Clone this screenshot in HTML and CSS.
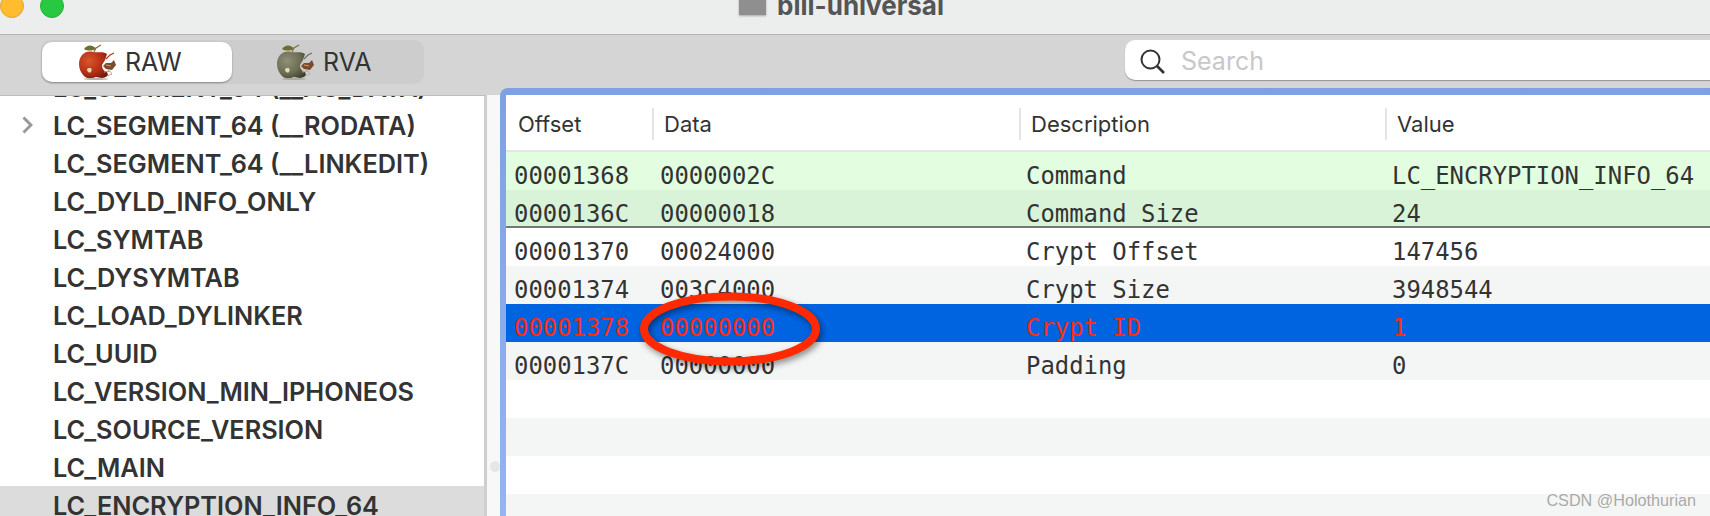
FILE: index.html
```html
<!DOCTYPE html>
<html lang="en">
<head>
  <meta charset="UTF-8" />
  <title>bili-universal</title>
  <link rel="stylesheet" href="styles.css">
</head>
<body>
  <div class="window">
    <header class="titlebar">
      <span class="light light-yellow"></span>
      <span class="light light-green"></span>
      <div class="title">
        <span class="folder"></span>
        <strong>bili-universal</strong>
      </div>
    </header>

    <div class="toolbar">
      <div class="segmented">
        <div class="seg active">
          <svg class="apple" viewBox="0 0 38 36">
            <defs>
              <radialGradient id="redBody" cx="0.35" cy="0.35" r="0.8">
                <stop offset="0" stop-color="#d9562a"/>
                <stop offset="0.6" stop-color="#b32c16"/>
                <stop offset="1" stop-color="#6e180b"/>
              </radialGradient>
            </defs>
            <path d="M5 5C8 1 13 0 17 5C13 7 8 7 5 5Z" fill="#6d6f32"/>
            <path d="M15 8L17 4L22 1" fill="none" stroke="#8a6a3a" stroke-width="1.2"/>
            <path d="M0 20C0 11 7 6 14 8C19 9 23 7 28 10L26 16L23 21C23 25 25 27 28 28L29 31C26 35 21 34 17 33C12 35 8 35 5 32C2 29 0 25 0 20Z" fill="url(#redBody)"/>
            <path d="M27 15L31 11L35 9" fill="none" stroke="#b5351c" stroke-width="1.2"/>
            <path d="M24 22L27 19L32 19L35 16L37 21L33 26L27 25Z" fill="#7d4a2c"/>
            <path d="M27 21L32 22M30 25L29 28" stroke="#c99b78" stroke-width="1"/>
            <path d="M25 28L31 27L33 30L28 32" fill="none" stroke="#c9a184" stroke-width="1"/>
            <path d="M8 26C8 24 10 24 11 24C13 24 13 26 12 28C11 29 9 29 8 26Z" fill="#e6dcae"/>
            <ellipse cx="17" cy="35" rx="12" ry="1" fill="#b9b4ac"/>
          </svg>
          <span>RAW</span>
        </div>
        <div class="seg">
          <svg class="apple" viewBox="0 0 38 36">
            <defs>
              <radialGradient id="oliveBody" cx="0.35" cy="0.35" r="0.8">
                <stop offset="0" stop-color="#8f9076"/>
                <stop offset="0.6" stop-color="#6a6b50"/>
                <stop offset="1" stop-color="#3a3a2a"/>
              </radialGradient>
            </defs>
            <path d="M5 5C8 1 13 0 17 5C13 7 8 7 5 5Z" fill="#6d6f32"/>
            <path d="M15 8L17 4L22 1" fill="none" stroke="#8a6a3a" stroke-width="1.2"/>
            <path d="M0 20C0 11 7 6 14 8C19 9 23 7 28 10L26 16L23 21C23 25 25 27 28 28L29 31C26 35 21 34 17 33C12 35 8 35 5 32C2 29 0 25 0 20Z" fill="url(#oliveBody)"/>
            <path d="M27 15L31 11L35 9" fill="none" stroke="#6f7058" stroke-width="1.2"/>
            <path d="M24 22L27 19L32 19L35 16L37 21L33 26L27 25Z" fill="#7d4a2c"/>
            <path d="M27 21L32 22M30 25L29 28" stroke="#c99b78" stroke-width="1"/>
            <path d="M25 28L31 27L33 30L28 32" fill="none" stroke="#b8b4a0" stroke-width="1"/>
            <path d="M8 26C8 24 10 24 11 24C13 24 13 26 12 28C11 29 9 29 8 26Z" fill="#e0dcc0"/>
            <ellipse cx="17" cy="35" rx="12" ry="1" fill="#a9a9a2"/>
          </svg>
          <span>RVA</span>
        </div>
      </div>
      <div class="search">
        <svg class="search-icon" viewBox="0 0 25 25">
          <circle cx="10.5" cy="10.5" r="9" fill="none" stroke="#333" stroke-width="2"/>
          <path d="M17 17L24 24" stroke="#333" stroke-width="2.6"/>
        </svg>
        <span>Search</span>
      </div>
    </div>

    <div class="main">
      <ul class="sidebar">
        <li class="item first"><span class="slot"></span>LC_SEGMENT_64 (__AU_DATA)</li>
        <li class="item"><span class="slot"><svg class="chevron" viewBox="0 0 11 18"><path d="M1.5 1.5L9 9L1.5 16.5" fill="none" stroke="#999" stroke-width="3"/></svg></span>LC_SEGMENT_64 (__RODATA)</li>
        <li class="item"><span class="slot"></span>LC_SEGMENT_64 (__LINKEDIT)</li>
        <li class="item"><span class="slot"></span>LC_DYLD_INFO_ONLY</li>
        <li class="item"><span class="slot"></span>LC_SYMTAB</li>
        <li class="item"><span class="slot"></span>LC_DYSYMTAB</li>
        <li class="item"><span class="slot"></span>LC_LOAD_DYLINKER</li>
        <li class="item"><span class="slot"></span>LC_UUID</li>
        <li class="item"><span class="slot"></span>LC_VERSION_MIN_IPHONEOS</li>
        <li class="item"><span class="slot"></span>LC_SOURCE_VERSION</li>
        <li class="item"><span class="slot"></span>LC_MAIN</li>
        <li class="item selected"><span class="slot"></span>LC_ENCRYPTION_INFO_64</li>
      </ul>

      <div class="divider"><span class="grip"></span></div>

      <div class="pane">
        <div class="table">
          <div class="thead">
            <div class="th">Offset</div>
            <div class="th">Data</div>
            <div class="th">Description</div>
            <div class="th">Value</div>
          </div>
          <div class="row green"><span>00001368</span><span>0000002C</span><span>Command</span><span>LC_ENCRYPTION_INFO_64</span></div>
          <div class="row green-alt"><span>0000136C</span><span>00000018</span><span>Command Size</span><span>24</span></div>
          <div class="row"><span>00001370</span><span>00024000</span><span>Crypt Offset</span><span>147456</span></div>
          <div class="row alt"><span>00001374</span><span>003C4000</span><span>Crypt Size</span><span>3948544</span></div>
          <div class="row picked"><span>00001378</span><span>00000000</span><span>Crypt ID</span><span>1</span></div>
          <div class="row alt"><span>0000137C</span><span>00000000</span><span>Padding</span><span>0</span></div>
          <div class="row"></div>
          <div class="row alt"></div>
          <div class="row"></div>
          <div class="row alt"></div>
        </div>
      </div>
    </div>

    <svg class="circle" viewBox="0 0 200 90">
      <ellipse cx="100" cy="44" rx="86" ry="32.5" fill="none" stroke="#ff2a00" stroke-width="8"/>
    </svg>
    <div class="watermark">CSDN @Holothurian</div>
  </div>
</body>
</html>
```

FILE: styles.css
```css
* {
  box-sizing: border-box;
}

body {
  margin: 0;
  overflow: hidden;
  font-family: Inter, "Liberation Sans", sans-serif;
  color: #333;
}

.window {
  position: relative;
  width: 1710px;
  height: 516px;
  overflow: hidden;
  background: #f8f8f8;
}

.titlebar {
  display: flex;
  align-items: flex-end;
  gap: 16px;
  height: 35px;
  padding-bottom: 16px;
  overflow: hidden;
  background: #eceeee;
  border-bottom: 1px solid #b4b4b4;
}

.light {
  flex: none;
  width: 24px;
  height: 24px;
  border-radius: 50%;
}

.light-yellow {
  background: #febc2e;
  border: 1px solid #e5a42a;
}

.light-green {
  background: #28c840;
  border: 1px solid #22b136;
}

.title {
  display: flex;
  align-items: flex-end;
  gap: 11px;
  margin-left: 659px;
}

.title strong {
  font-size: 26px;
  font-weight: 700;
  line-height: 26px;
  color: #555;
  margin-bottom: -1px;
}

.folder {
  width: 27px;
  height: 24px;
  margin-bottom: 3px;
  background: #8f8f8f;
  box-shadow: 0 1px 2px rgba(0, 0, 0, 0.3);
}

.toolbar {
  display: flex;
  align-items: flex-start;
  height: 60px;
  padding: 5px 0 0 41px;
  background: #d5d5d5;
}

.segmented {
  display: flex;
  flex: none;
  width: 383px;
  height: 44px;
  padding: 2px 0 0 1px;
  background: #cdcdcd;
  border-radius: 10px;
}

.seg {
  display: flex;
  align-items: center;
  gap: 8px;
  width: 191px;
  height: 40px;
  padding-left: 45px;
  font-size: 25px;
  border-radius: 10px;
}

.seg.active {
  width: 190px;
  padding-left: 37px;
  background: #fff;
  box-shadow: 0 1px 2px rgba(0, 0, 0, 0.35);
}

.apple {
  flex: none;
  width: 38px;
  height: 36px;
}

.search {
  display: flex;
  align-items: center;
  flex: none;
  width: 700px;
  height: 40px;
  margin-left: 701px;
  padding: 2px 0 0 15px;
  font-size: 25px;
  color: #c8c8c8;
  background: #fff;
  border-radius: 10px;
  box-shadow: 0 1px 1px rgba(0, 0, 0, 0.3);
}

.search-icon {
  width: 25px;
  height: 25px;
  margin-right: 16px;
}

.main {
  display: flex;
  height: 421px;
}

.sidebar {
  flex: none;
  width: 487px;
  margin: 0;
  padding: 0;
  list-style: none;
  overflow: hidden;
  background: #fff;
  border-top: 1px solid #bdbdbd;
  border-right: 3px solid #cfcfcf;
}

.item {
  display: flex;
  align-items: center;
  height: 38px;
  font-size: 25.3px;
  font-weight: 600;
  white-space: nowrap;
}

.item.first {
  margin-top: -28px;
}

.item.selected {
  background: #dcdcdc;
}

.slot {
  display: flex;
  align-items: center;
  flex: none;
  width: 53px;
  padding-left: 22px;
}

.chevron {
  width: 11px;
  height: 18px;
}

.divider {
  display: flex;
  flex: none;
  align-items: center;
  width: 13px;
  padding: 322px 0 0 3px;
}

.grip {
  width: 11px;
  height: 11px;
  border-radius: 50%;
  background: #e6e6e6;
}

.pane {
  flex: 1;
  position: relative;
  margin-top: -7px;
  height: 428px;
  padding: 7px 0 0 6px;
  background: linear-gradient(to bottom, #7ea1e4, #94b4f4);
  border-top-left-radius: 8px;
}

.table {
  height: 100%;
  background: #fff;
  overflow: hidden;
}

.thead {
  display: grid;
  grid-template-columns: 146px 367px 366px 1fr;
  height: 57px;
  padding-top: 13px;
  border-bottom: 2px solid #e6e6e6;
}

.th {
  height: 32px;
  padding-left: 10px;
  font-size: 22px;
  line-height: 32px;
  border-left: 2px solid #e4e4e4;
}

.th:first-child {
  padding-left: 12px;
  border-left: 0;
}

.row {
  display: grid;
  grid-template-columns: 146px 366px 366px 1fr;
  height: 38px;
  padding: 9px 0 0 8px;
  font-family: "DejaVu Sans Mono", monospace;
  font-size: 23.9px;
  line-height: 30px;
  white-space: pre;
}

.row.alt {
  background: #f4f6f5;
}

.row.green {
  background: #e2fde0;
}

.row.green-alt {
  background: #d9f3d9;
  border-bottom: 2px solid #777;
}

.row.picked {
  background: #0064e1;
  color: #ff2a12;
}

.circle {
  position: absolute;
  left: 630px;
  top: 285px;
  width: 200px;
  height: 90px;
  filter: drop-shadow(2px 3px 3px rgba(0, 0, 0, 0.45));
}

.watermark {
  position: absolute;
  right: 14px;
  bottom: 6px;
  font-family: "Liberation Sans", sans-serif;
  font-size: 16.2px;
  color: #a8a8a8;
  text-shadow: 0 0 1px rgba(255, 255, 255, 0.8);
}
```
